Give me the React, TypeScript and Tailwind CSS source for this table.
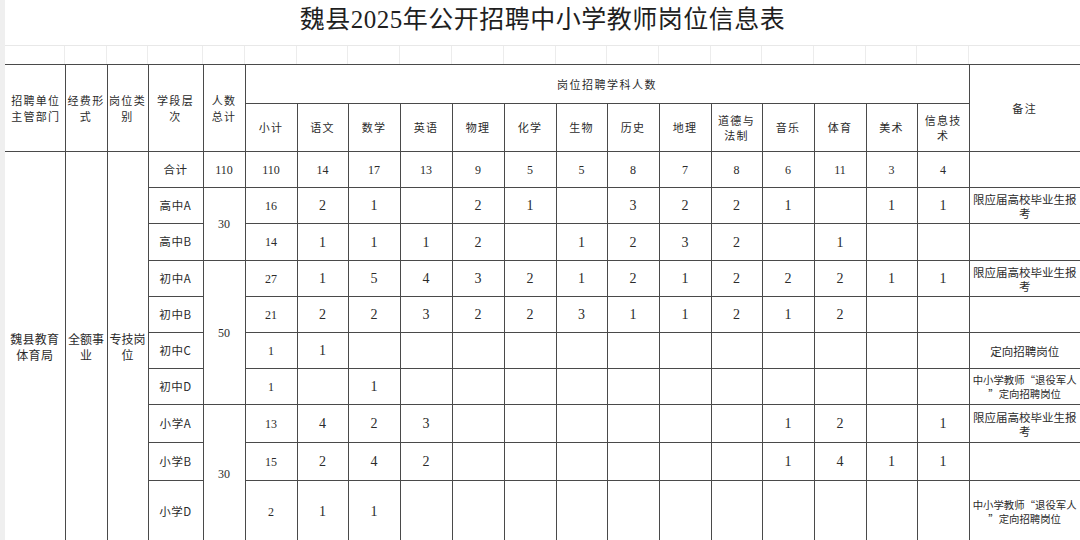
import React from "react";

const colW = [60, 42, 41, 55, 42, 52, 51, 52, 52, 52, 52, 51, 52, 52, 51, 52, 52, 51, 52, 111];

const subjects: string[][] = [
  ["语文"], ["数学"], ["英语"], ["物理"], ["化学"], ["生物"], ["历史"], ["地理"],
  ["道德与", "法制"], ["音乐"], ["体育"], ["美术"], ["信息技", "术"],
];

type Row = {
  label: string;
  h: string;
  sub: string;
  vals: string[];
  note?: string[];
  noteSize?: string;
  total?: { v: string; span: number };
  small?: boolean;
};

const e = "";
const NOTE_A = ["限应届高校毕业生报", "考"];
const NOTE_V = ["中小学教师“退役军人", "”定向招聘岗位"];

const rows: Row[] = [
  { label: "合计", h: "h-[36px]", sub: "110", vals: ["14", "17", "13", "9", "5", "5", "8", "7", "8", "6", "11", "3", "4"], total: { v: "110", span: 1 }, small: true },
  { label: "高中A", h: "h-[36px]", sub: "16", vals: ["2", "1", e, "2", "1", e, "3", "2", "2", "1", e, "1", "1"], note: NOTE_A, noteSize: "text-[11.5px]", total: { v: "30", span: 2 } },
  { label: "高中B", h: "h-[37px]", sub: "14", vals: ["1", "1", "1", "2", e, "1", "2", "3", "2", e, "1", e, e] },
  { label: "初中A", h: "h-[36px]", sub: "27", vals: ["1", "5", "4", "3", "2", "1", "2", "1", "2", "2", "2", "1", "1"], note: NOTE_A, noteSize: "text-[11.5px]", total: { v: "50", span: 4 } },
  { label: "初中B", h: "h-[36px]", sub: "21", vals: ["2", "2", "3", "2", "2", "3", "1", "1", "2", "1", "2", e, e] },
  { label: "初中C", h: "h-[36px]", sub: "1", vals: ["1", e, e, e, e, e, e, e, e, e, e, e, e], note: ["定向招聘岗位"], noteSize: "text-[11.5px]" },
  { label: "初中D", h: "h-[36px]", sub: "1", vals: [e, "1", e, e, e, e, e, e, e, e, e, e, e], note: NOTE_V, noteSize: "text-[10.4px]" },
  { label: "小学A", h: "h-[38px]", sub: "13", vals: ["4", "2", "3", e, e, e, e, e, e, "1", "2", e, "1"], note: NOTE_A, noteSize: "text-[11.5px]", total: { v: "30", span: 3 } },
  { label: "小学B", h: "h-[38px]", sub: "15", vals: ["2", "4", "2", e, e, e, e, e, e, "1", "4", "1", "1"] },
  { label: "小学D", h: "h-[62px]", sub: "2", vals: ["1", "1", e, e, e, e, e, e, e, e, e, e, e], note: NOTE_V, noteSize: "text-[10.4px]" },
];

const cjk = "font-['Noto_Sans_CJK_SC',sans-serif]";
const serif = "font-['Liberation_Serif','Noto_Sans_CJK_SC',serif]";
const bd = "border border-[#4a4a4a]";

function Lines({ lines }: { lines: string[] }) {
  return (
    <>
      {lines.map((l, i) => (
        <div key={i}>{l}</div>
      ))}
    </>
  );
}

export default function App() {
  return (
    <div className="w-[1080px] h-[540px] overflow-hidden bg-white flex text-[#2b2b2b]">
      <div className="w-[5px] shrink-0 bg-[#efefef]" />
      <div className="flex flex-col w-[1075px] shrink-0">
        <div className={`h-[46px] shrink-0 border-b border-[#e8e8e8] text-center text-[25px] leading-[40px] tracking-[0.5px] text-[#1f1f1f] ${serif}`}>
          魏县2025年公开招聘中小学教师岗位信息表
        </div>
        <div className="h-[18px] shrink-0 flex">
          {colW.map((w, i) => (
            <div key={i} style={{ width: w }} className={i < colW.length - 1 ? "border-r border-[#ececec]" : ""} />
          ))}
        </div>
        <table className="table-fixed border-collapse w-[1075px] shrink-0">
          <colgroup>
            {colW.map((w, i) => (
              <col key={i} style={{ width: w }} />
            ))}
          </colgroup>
          <thead>
            <tr className="h-[39px]">
              <th rowSpan={2} className={`${bd} border-l-0 ${cjk} text-[11px] font-normal tracking-[1.3px] leading-[16px] pl-[2px]`}>
                <Lines lines={["招聘单位", "主管部门"]} />
              </th>
              <th rowSpan={2} className={`${bd} ${cjk} text-[11px] font-normal tracking-[1.3px] leading-[16px]`}>
                <Lines lines={["经费形", "式"]} />
              </th>
              <th rowSpan={2} className={`${bd} ${cjk} text-[11px] font-normal tracking-[1.3px] leading-[16px]`}>
                <Lines lines={["岗位类", "别"]} />
              </th>
              <th rowSpan={2} className={`${bd} ${cjk} text-[11px] font-normal tracking-[1.3px] leading-[16px]`}>
                <Lines lines={["学段层", "次"]} />
              </th>
              <th rowSpan={2} className={`${bd} ${cjk} text-[11px] font-normal tracking-[1.3px] leading-[16px]`}>
                <Lines lines={["人数", "总计"]} />
              </th>
              <th colSpan={14} className={`${bd} ${cjk} text-[11px] font-normal tracking-[1.5px]`}>
                岗位招聘学科人数
              </th>
              <th rowSpan={2} className={`${bd} ${cjk} text-[11px] font-normal tracking-[1.5px]`}>
                备注
              </th>
            </tr>
            <tr className="h-[48px]">
              <th className={`${bd} ${cjk} text-[11px] font-normal tracking-[1.3px]`}>小计</th>
              {subjects.map((s, i) => (
                <th key={i} className={`${bd} ${cjk} text-[11px] font-normal tracking-[1.3px] leading-[15px]`}>
                  <Lines lines={s} />
                </th>
              ))}
            </tr>
          </thead>
          <tbody>
            {rows.map((r, ri) => (
              <tr key={ri} className={r.h}>
                {ri === 0 && (
                  <>
                    <td rowSpan={rows.length} className={`${bd} border-l-0 text-center ${cjk} text-[12px] leading-[16px] tracking-[0.3px]`}>
                      <Lines lines={["魏县教育", "体育局"]} />
                    </td>
                    <td rowSpan={rows.length} className={`${bd} text-center ${cjk} text-[12px] leading-[16px]`}>
                      <Lines lines={["全额事", "业"]} />
                    </td>
                    <td rowSpan={rows.length} className={`${bd} text-center ${cjk} text-[12px] leading-[16px]`}>
                      <Lines lines={["专技岗", "位"]} />
                    </td>
                  </>
                )}
                <td className={`${bd} text-center ${cjk} text-[11.5px] tracking-[0.6px]`}>{r.label}</td>
                {r.total && (
                  <td rowSpan={r.total.span} className={`${bd} text-center ${serif} text-[12px]`}>
                    {r.total.v}
                  </td>
                )}
                <td className={`${bd} text-center ${serif} text-[12px]`}>{r.sub}</td>
                {r.vals.map((v, vi) => (
                  <td key={vi} className={`${bd} text-center ${serif} ${r.small ? "text-[12px]" : "text-[14px]"}`}>
                    {v}
                  </td>
                ))}
                <td className={`${bd} text-center ${cjk} ${r.noteSize ?? "text-[11.5px]"} leading-[14px] px-0`}>
                  {r.note ? <Lines lines={r.note} /> : null}
                </td>
              </tr>
            ))}
          </tbody>
        </table>
      </div>
    </div>
  );
}
